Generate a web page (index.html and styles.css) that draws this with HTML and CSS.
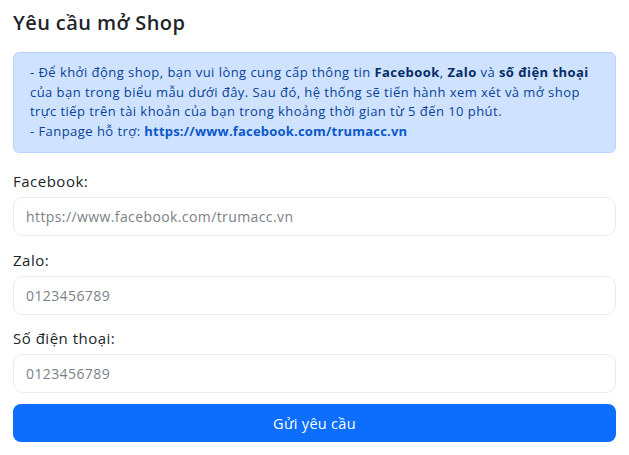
FILE: index.html
```html
<!DOCTYPE html>
<html lang="vi">
<head>
<meta charset="utf-8">
<link rel="stylesheet" href="styles.css">
</head>
<body>
<div class="page">
  <h1 class="title">Yêu cầu mở Shop</h1>
  <div class="alert">
    - Để khởi động shop, bạn vui lòng cung cấp thông tin <b>Facebook</b>, <b>Zalo</b> và <b>số điện thoại</b><br>
    của bạn trong biểu mẫu dưới đây. Sau đó, hệ thống sẽ tiến hành xem xét và mở shop<br>
    trực tiếp trên tài khoản của bạn trong khoảng thời gian từ 5 đến 10 phút.<br>
    - Fanpage hỗ trợ: <a class="link" href="#">https://www.facebook.com/trumacc.vn</a>
  </div>
  <form class="form">
    <label class="label">Facebook:</label>
    <input class="input" type="text" placeholder="https://www.facebook.com/trumacc.vn">
    <label class="label">Zalo:</label>
    <input class="input" type="text" placeholder="0123456789">
    <label class="label">Số điện thoại:</label>
    <input class="input" type="text" placeholder="0123456789">
    <button class="btn" type="button">Gửi yêu cầu</button>
  </form>
</div>
</body>
</html>
```
FILE: styles.css
```css
html, body { margin: 0; padding: 0; background: #fff; }
body { font-family: "Open Sans", "Noto Sans", sans-serif; color: #212529; }
.page { padding: 10px 13px 0 13px; }
.title { margin: 0 0 16px 0; font-size: 20px; letter-spacing: 0.4px; font-weight: 600; line-height: 26px; color: #212529; }
.alert {
  background: #cfe2ff; border: 1px solid #b6d4fe; border-radius: 6px;
  color: #084298; font-size: 13px; letter-spacing: 0.45px; line-height: 19.5px;
  padding: 10px 16px 11px 16px; white-space: nowrap;
}
.alert b { font-weight: 700; color: #052c65; }
.link { color: #0a58ca; font-weight: 700; letter-spacing: 0.2px; text-decoration: none; }
.form { display: flex; flex-direction: column; margin-top: 18px; }
.label { font-size: 15px; letter-spacing: 0.5px; line-height: 20px; margin-bottom: 6px; }
.input {
  box-sizing: border-box; height: 39px; border: 1px solid #e9ecef; border-radius: 10px;
  padding: 0 12px; font-family: inherit; font-size: 14px; letter-spacing: 0.4px; color: #212529; margin: 0 0 13.5px 0; outline: none;
}
.input::placeholder { color: #7b8188; }
.btn {
  box-sizing: border-box; height: 38px; border: 0; border-radius: 8px; background: #0d6efd;
  color: #fff; font-family: inherit; font-size: 14.5px; letter-spacing: 0.3px; margin-top: -2.5px;
}
```
